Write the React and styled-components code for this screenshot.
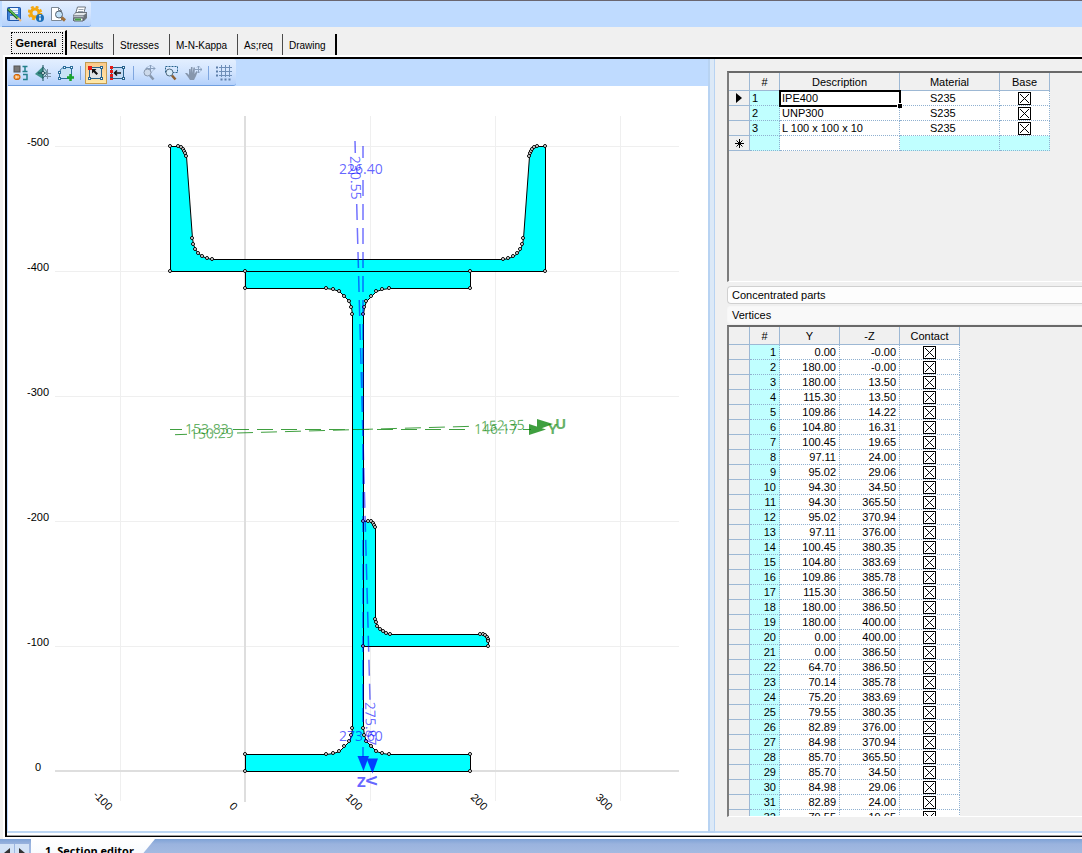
import React from "react";
import styled, { createGlobalStyle } from "styled-components";

const GlobalStyle = createGlobalStyle`
  * {
    box-sizing: border-box;
  }

  body {
    margin: 0;
    background: #f0f0f0;
    font-family: "Liberation Sans", Arial, sans-serif;
    font-size: 11px;
    color: #000;
    overflow: hidden;
  }
`;

const Window = styled.div`
  display: flex;
  flex-direction: column;
  height: 100vh;
`;

const TopBar = styled.header`
  display: flex;
  flex: none;
  height: 27px;
  padding-left: 2px;
  border-top: 1px solid #6a6670;
  background: #bfdbff;
`;

const ToolStrip = styled.div`
  display: flex;
  align-items: center;
  padding: ${({ $padding }) => $padding};
  border-bottom: 1px solid #6f9fe0;
  border-radius: 0 3px 3px 0;
  background: linear-gradient(#e3efff, #d2e4fe 50%, #b4d1fb);
`;

const ToolButton = styled.button`
  display: flex;
  align-items: center;
  justify-content: center;
  width: 22px;
  height: 22px;
  padding: 0;
  border: 1px solid ${({ $active }) => ($active ? "#c29b52" : "transparent")};
  background: ${({ $active }) =>
    $active ? "linear-gradient(#fbc98a, #ffd99c 50%, #ffe9a8)" : "none"};
`;

const Separator = styled.span`
  width: 1px;
  height: 14px;
  margin: 0 4px;
  background: #7fa6df;
`;

const Tabs = styled.nav`
  display: flex;
  align-items: flex-end;
  flex: none;
  height: 28px;
  padding-left: 10px;
`;

const Tab = styled.button`
  width: ${({ $width }) => $width};
  height: 21px;
  padding: 2px 0 0 3px;
  border: 0;
  border-right: 1px solid #4a4a4a;
  background: #f0f0f0;
  font: 10px "Liberation Sans", sans-serif;
  text-align: left;
  white-space: nowrap;

  &:not(:nth-child(2)) {
    padding-left: 6px;
  }

  &:last-child {
    border-right: 2px solid #000;
  }
`;

const ActiveTab = styled.button`
  width: 57px;
  height: 25px;
  padding: 1px 2px 2px 1px;
  border: 0;
  border-top: 1px solid #fff;
  border-right: 2px solid #000;
  background: #f0f0f0;
  font: bold 11px "Liberation Sans", sans-serif;

  span {
    display: block;
    line-height: 20px;
    padding-right: 2px;
    border: 1px dotted #000;
  }
`;

const Frame = styled.main`
  display: flex;
  flex: 1;
  flex-direction: column;
  min-height: 0;
  margin-left: 3px;
  border: solid #fff;
  border-width: 2px 0 2px 2px;
`;

const FrameInner = styled.div`
  display: grid;
  flex: 1;
  min-height: 0;
  grid-template-columns: minmax(0, 1fr) 7px 367px;
  border: solid #000;
  border-width: 2px 0 1px 2px;
`;

const Pane = styled.section`
  display: flex;
  flex-direction: column;
  min-width: 0;
  min-height: 0;
  padding: ${({ $padding }) => $padding || "0"};
  background: ${({ $background }) => $background};
  border-bottom: 2px solid #bcd6f3;
  border-left: ${({ $edge }) => ($edge ? "1px solid #bfdbff" : "0")};
  box-shadow: 0 2px 0 #fff, 0 3px 0 #a0a0a0;
  margin-bottom: 3px;
`;

const Splitter = styled.div`
  margin-bottom: 3px;
  border: solid #b8d3f2;
  border-width: 0 1px 2px 2px;
  background: #dce9f7;
  box-shadow: 0 2px 0 #fff, 0 3px 0 #a0a0a0;
`;

const CanvasBar = styled.div`
  display: flex;
  flex: none;
  height: 27px;
  background: #bfdbff;
`;

const Drawing = styled.svg`
  display: block;
  flex: 1;
  width: 100%;
  min-height: 0;
`;

const GridBox = styled.div`
  flex: ${({ $fill }) => ($fill ? "1" : "none")};
  height: ${({ $fill }) => ($fill ? "auto" : "211px")};
  min-height: 0;
  margin-top: ${({ $fill }) => ($fill ? "1px" : "0")};
  overflow: hidden;
  border: solid #696969;
  border-width: 2px 0 1px 2px;
  border-left-color: #7c7c7c;
  border-bottom-color: #fff;
`;

const Table = styled.table`
  table-layout: fixed;
  border-collapse: separate;
  border-spacing: 0;
  width: ${({ $width }) => $width};
`;

const HeadCell = styled.th`
  width: ${({ $width }) => $width};
  height: 18px;
  padding: 1px 0 0;
  border: solid #9db8d4;
  border-width: 0 1px 1px 0;
  background: #f0f0f0;
  font-weight: normal;
  line-height: 16px;
`;

const RowHead = styled.td`
  height: 15px;
  padding: 0;
  border: solid #9db8d4;
  border-width: 0 1px 1px 0;
  background: #f0f0f0;
  line-height: 14px;

  svg {
    display: block;
    margin: 0 auto;
  }
`;

const Cell = styled.td`
  position: relative;
  height: 15px;
  padding: ${({ $padding }) => $padding || "0 3px 0 2px"};
  border: dotted #8fb0d0;
  border-width: 0 1px 1px 0;
  background: ${({ $tint }) => ($tint ? "#c0ffff" : "#fff")};
  line-height: 14px;
  text-align: ${({ $align }) => $align || "left"};
`;

const SelectedCell = styled(Cell)`
  z-index: 1;
  outline: 2px solid #000;
  outline-offset: -1px;

  &::after {
    content: "";
    position: absolute;
    right: -3px;
    bottom: -3px;
    width: 4px;
    height: 4px;
    border: solid #fff;
    border-width: 1px 0 0 1px;
    background: #000;
  }
`;

const Check = styled.input`
  display: block;
  width: 13px;
  height: 13px;
  margin: 0 auto;
  appearance: none;
  border: 1px solid #000;
  background: linear-gradient(
        45deg,
        transparent 46%,
        #000 46%,
        #000 54%,
        transparent 54%
      )
      center / 9px 9px no-repeat,
    linear-gradient(
        -45deg,
        transparent 46%,
        #000 46%,
        #000 54%,
        transparent 54%
      )
      center / 9px 9px no-repeat,
    #fff;
`;

const Accordion = styled.button`
  flex: none;
  height: 18px;
  margin-top: ${({ $gap }) => $gap};
  padding: 0 4px;
  border: 1px solid ${({ $closed }) => ($closed ? "#d0d0d0" : "#f7f7f7")};
  border-right: 0;
  border-radius: 4px 0 0 4px;
  background: ${({ $closed }) => ($closed ? "#fdfdfd" : "#f9f9f9")};
  font: 11px "Liberation Sans", sans-serif;
  text-align: left;
`;

const Sheets = styled.footer`
  display: flex;
  flex: none;
  height: 14px;
  overflow: hidden;
  background: linear-gradient(#7ea2d6, #9ab3de 5px, #a3bae1);
`;

const SheetArrow = styled.button`
  width: 14px;
  height: 18px;
  margin: 5px 1px 0 0;
  padding: 0;
  border: 0;
  background: #d3e2f6;

  svg {
    display: block;
    margin: 2px auto;
  }
`;

const SheetTab = styled.button`
  width: 124px;
  height: 24px;
  margin-left: 1px;
  padding: 0 0 0 14px;
  border: 0;
  background: linear-gradient(#fff, #f4f8fe);
  clip-path: polygon(0 0, 100% 0, 84% 100%, 0 100%);
  font: bold 11px "Open Sans", sans-serif;
  line-height: 24px;
  text-align: left;
  white-space: nowrap;
`;

const SaveIcon = () => (
  <svg width="16" height="16" viewBox="0 0 16 16">
    <rect x="1.5" y="1.5" width="13" height="13" rx="1" fill="#3f82d8" stroke="#1f57ab" />
    <rect x="4" y="2" width="8" height="6" fill="#eef5fc" />
    <path d="M4 4.5h8M4 6.5h8" stroke="#a9c5e6" />
    <rect x="4" y="10" width="8" height="4" fill="#cddcf0" />
    <path d="M2 3l10 9.500" stroke="#24502a" strokeWidth="3" />
    <path d="M2.500 3l10 9.500" stroke="#5fcb50" strokeWidth="1.5" />
    <path d="M12 12l3 3" stroke="#efb97a" strokeWidth="2" />
  </svg>
);

const SettingsIcon = () => (
  <svg width="16" height="16" viewBox="0 0 16 16">
    <circle cx="7" cy="7" r="4" fill="none" stroke="#f5a80f" strokeWidth="3" />
    <circle cx="7" cy="7" r="6" fill="none" stroke="#f5a80f" strokeWidth="2.5" strokeDasharray="2.7 2.01" />
    <circle cx="12" cy="12" r="4" fill="#1c6fb8" />
    <path d="M12 11.5v3M12 9v1.5" stroke="#fff" strokeWidth="1.5" />
  </svg>
);

const PreviewIcon = () => (
  <svg width="16" height="16" viewBox="0 0 16 16">
    <path d="M1.500 1.500h7l3 3v10h-10z" fill="#fff" stroke="#7b8794" />
    <path d="M8.500 1.500v3h3" fill="none" stroke="#7b8794" />
    <circle cx="9" cy="8.500" r="3.500" fill="#c4e2f8" stroke="#55616f" />
    <path d="M11.500 11.500l3.500 3" stroke="#a0703c" strokeWidth="3" />
  </svg>
);

const PrintIcon = () => (
  <svg width="16" height="16" viewBox="0 0 16 16">
    <path d="M5.500 1h8l-2 7H3.500z" fill="#fff" stroke="#6f7780" />
    <path d="M6.500 3.500h5M6 5.500h5" stroke="#9aa4af" />
    <path d="M1 9l3-3h11v6l-3 3H1z" fill="#6c747c" />
    <path d="M1.500 9l2.500-2h10.500l-2.500 2z" fill="#e3e7ea" />
    <path d="M1.500 9.500h10v2h-10z" fill="#b6bdc4" />
    <path d="M2 12h9v3H2z" fill="#fff" stroke="#59616a" />
    <path d="M3 13.500h6" stroke="#43a047" strokeWidth="2" />
  </svg>
);

const ShapesIcon = () => (
  <svg width="16" height="16" viewBox="0 0 16 16">
    <rect x="1" y="1" width="6" height="6" fill="#777" stroke="#555" />
    <rect x="1" y="9.500" width="6" height="5" rx="2" fill="#f08a24" stroke="#c9630c" />
    <path d="M3 10.500v3M3 12h3" stroke="#fff3e0" />
    <path d="M9.500 1.500h5M9.500 6.500h5M12 1.500v5M10 9.500h4v5h-4" fill="none" stroke="#23808c" strokeWidth="1.500" />
  </svg>
);

const MirrorIcon = () => (
  <svg width="16" height="16" viewBox="0 0 16 16">
    <path d="M0 9l8-7.500V14z" fill="#3c8f86" />
    <path d="M8 2l5 6-5 5" fill="#bcd9e2" stroke="#4b7c8c" />
    <path d="M3 8h9M8 0v16" stroke="#174d56" />
    <circle cx="8" cy="8" r="1.500" fill="#fff" stroke="#174d56" />
    <path d="M12.500 4v10M10 8.500h6M10 11.500h6" stroke="#7b90a3" />
  </svg>
);

const AddPolygonIcon = () => (
  <svg width="17" height="16" viewBox="0 0 17 16">
    <path d="M2.500 13.500v-6c1-4 3-5 5-5h7v11z" fill="#c7e2f5" stroke="#2d6f9b" />
    <g fill="#fff" stroke="#2d6f9b">
      <rect x="1.500" y="12.500" width="2" height="2" />
      <rect x="1.500" y="6.500" width="2" height="2" />
      <rect x="6.500" y="1.500" width="2" height="2" />
      <rect x="13.500" y="1.500" width="2" height="2" />
    </g>
    <path d="M13.500 9v7M10 12.500h7" stroke="#19a52c" strokeWidth="2.500" />
  </svg>
);

const PickIcon = ({ move }) => (
  <svg width="18" height="16" viewBox="0 0 18 16">
    <rect x="2.500" y="2.500" width="12" height="11" fill={move ? "#c3dbf5" : "#dfe3e4"} stroke="#27628c" />
    <g fill="#fff" stroke="#27628c">
      <rect x="13.500" y="1.500" width="2" height="2" />
      <rect x="13.500" y="12.500" width="2" height="2" />
      <rect x="1.500" y="12.500" width="2" height="2" />
    </g>
    {move ? (
      <>
        <path d="M2.500 1v14" stroke="#e41b17" strokeWidth="3" strokeDasharray="3 1" />
        <path d="M5 8h7M8 5.500L5.500 8 8 10.500" fill="none" stroke="#111" strokeWidth="1.500" />
      </>
    ) : (
      <>
        <rect x="1" y="1" width="4" height="4" fill="#e41b17" />
        <path d="M5 4h4.500L8 5.500l3 3L9.500 10l-3-3L5 8.500z" fill="#111" />
      </>
    )}
  </svg>
);

const ZoomIcon = ({ pan }) => (
  <svg width="16" height="16" viewBox="0 0 16 16">
    {pan ? (
      <path d="M5 3.500h9M9.500 0v8M5 3.500l2-2M5 3.500l2 2M14 3.500l-2-2M14 3.500l-2 2M8 1.500l1.500-1.500 1.500 1.500M8 6.500L9.500 8 11 6.500" fill="none" stroke="#8aa0bd" />
    ) : (
      <rect x="2.500" y="1.500" width="12" height="6" fill="none" stroke="#27628c" strokeDasharray="2 1" />
    )}
    <circle cx="6.500" cy="7.500" r="3.500" fill={pan ? "#ccd9ea" : "#d7ebfa"} stroke={pan ? "#8797ad" : "#526c82"} />
    <path d="M9 10.500l3.500 4" stroke={pan ? "#8797ad" : "#8c6034"} strokeWidth="2.500" />
  </svg>
);

const HandIcon = () => (
  <svg width="17" height="16" viewBox="0 0 17 16">
    <path d="M0 8h2l2 2V4h1.500v4l.5-6h1.500v6l1-5.500h1.500L9.500 9l2-3 1 1L11 11l-2 4H5l-2-3z" fill="#8797ad" />
    <path d="M10 4.500h7M13.500 1v7M15.500 3l1.500 1.500L15.500 6M12 2.500L13.500 1 15 2.500M12 6.500L13.500 8 15 6.500" fill="none" stroke="#8aa0bd" />
  </svg>
);

const RasterIcon = () => (
  <svg width="18" height="16" viewBox="0 0 18 16">
    <path d="M6.500 0v12M10.500 0v12M14.500 0v12M4 2.500h13M4 6.500h13M4 10.500h13" stroke="#6f8fb8" />
    <path d="M1 2.500h2M1 6.500h2M1 10.500h2M5.500 14.500h2M9.500 14.500h2M13.500 14.500h2" stroke="#5e7fa9" strokeWidth="2" />
  </svg>
);

const vertices = [
  [0, 0], [180, 0], [180, 13.5], [115.3, 13.5], [109.86, 14.22],
  [104.8, 16.31], [100.45, 19.65], [97.11, 24], [95.02, 29.06],
  [94.3, 34.5], [94.3, 365.5], [95.02, 370.94], [97.11, 376],
  [100.45, 380.35], [104.8, 383.69], [109.86, 385.78], [115.3, 386.5],
  [180, 386.5], [180, 400], [0, 400], [0, 386.5], [64.7, 386.5],
  [70.14, 385.78], [75.2, 383.69], [79.55, 380.35], [82.89, 376],
  [84.98, 370.94], [85.7, 365.5], [85.7, 34.5], [84.98, 29.06],
  [82.89, 24], [79.55, 19.65], [75.2, 16.31], [70.14, 14.22],
  [64.7, 13.5], [0, 13.5]
];

const sections = [
  { name: "IPE400", material: "S235" },
  { name: "UNP300", material: "S235" },
  { name: "L 100 x 100 x 10", material: "S235" }
];

const beam = vertices.map(([y, z]) => [
  Math.round(245 + y * 1.25),
  Math.round(271 + z * 1.25)
]);

const channelHalf = [
  [170, 271], [170, 146], [178, 146], [181, 147], [183, 149], [184, 151],
  [185, 153], [186, 156], [192, 238], [193, 244], [195, 249], [198, 253],
  [202, 256], [207, 258], [212, 259]
];
const channel = [
  ...channelHalf,
  ...channelHalf.map(([x, y]) => [715 - x, y]).reverse()
];

const angle = [
  [363, 646], [363, 521], [368, 521], [371, 521], [373, 523], [374, 525],
  [375, 527], [375, 619], [376, 622], [377, 626], [380, 629], [383, 631],
  [386, 633], [390, 634], [480, 634], [483, 634], [485, 635], [487, 637],
  [488, 639], [488, 641], [488, 646]
];

const Shape = ({ points }) => (
  <g transform="translate(.5 .5)" stroke="#000">
    <polygon points={points.map(p => p.join(",")).join(" ")} fill="#0ff" />
  </g>
);

const Nodes = ({ points }) => (
  <g fill="#fff" stroke="#000">
    {points.map(([x, y]) => (
      <circle key={`${x}-${y}`} cx={x} cy={y} r="1.500" />
    ))}
  </g>
);

const SectionDrawing = () => (
  <Drawing viewBox="8 86 700 745" preserveAspectRatio="xMinYMin meet">
    <g stroke="#efefef">
      {[120.5, 370.5, 495.5, 620.5].map(x => (
        <line key={x} x1={x} x2={x} y1="116" y2="801" />
      ))}
      {[146.5, 271.5, 396.5, 521.5, 646.5].map(y => (
        <line key={y} x1="55" x2="679" y1={y} y2={y} />
      ))}
    </g>
    <path d="M245 116V802M55 771H679" stroke="#dedede" strokeWidth="2" />

    <g fontSize="11" textAnchor="middle">
      {[500, 400, 300, 200, 100, 0].map(z => (
        <text key={z} x="38" y={771 - z * 1.25}>
          {z ? -z : 0}
        </text>
      ))}
    </g>
    <g fontSize="11" textAnchor="end">
      {[-100, 0, 100, 200, 300].map(y => (
        <text key={y} transform={`translate(${233 + y * 1.25} 811) rotate(45)`}>
          {y}
        </text>
      ))}
    </g>

    <Shape points={channel} />
    <Shape points={beam} />
    <Shape points={angle} />
    <Nodes points={channel} />
    <Nodes points={beam} />
    <Nodes points={angle} />

    <g stroke="#00f" strokeWidth="1.500" opacity=".55">
      <path d="M363 146v12M363 747v10" />
      <path d="M363 180V722" strokeDasharray="16 8" />
      <path d="M355 141l.3 12" />
      <path d="M356.700 204L370 700" strokeDasharray="16 8" />
    </g>
    <g fill="#00f" opacity=".75">
      <path d="M357.500 756h11.500l-5.500 15z" />
      <path d="M366.500 758.500h11.500l-5.500 15z" />
    </g>
    <g stroke="#008000" opacity=".75">
      <path d="M170 429.500h12M523 429.500h8M175 434.700l12-.4" />
      <path d="M233 429.500H470" strokeDasharray="16 8" />
      <path d="M237 433L472 426.300" strokeDasharray="16 8" />
    </g>
    <g fill="#008000" opacity=".75">
      <path d="M529 424v11l17-5.500z" />
      <path d="M537 419v11l16-6z" />
    </g>

    <g fontFamily="Open Sans, sans-serif" fontSize="14" fill="#00f" fillOpacity=".62">
      <text x="339" y="174">226.40</text>
      <text transform="translate(350 156) rotate(88.500)">230.55</text>
      <text x="339" y="741">273.60</text>
      <text transform="translate(365 702) rotate(88.500)">275.87</text>
      <text x="357" y="787" fontSize="15" fontWeight="bold">Z</text>
      <text transform="translate(366 776) rotate(88.500)" fontSize="15" fontWeight="bold">V</text>
    </g>
    <g fontFamily="Open Sans, sans-serif" fontSize="14" fill="#008000" fillOpacity=".62">
      <text x="185" y="434">153.83</text>
      <text transform="translate(190 439) rotate(-1.500)">150.29</text>
      <text x="474" y="434">146.17</text>
      <text transform="translate(481 431) rotate(-1.500)">152.35</text>
      <text x="548" y="434" fontSize="15" fontWeight="bold">Y</text>
      <text x="555" y="429" fontSize="15" fontWeight="bold">U</text>
    </g>
  </Drawing>
);

const App = () => (
  <>
    <GlobalStyle />
    <Window>
      <TopBar>
        <ToolStrip $padding="0 0 0 1px">
          <ToolButton aria-label="Save"><SaveIcon /></ToolButton>
          <ToolButton aria-label="Settings"><SettingsIcon /></ToolButton>
          <ToolButton aria-label="Preview"><PreviewIcon /></ToolButton>
          <ToolButton aria-label="Print"><PrintIcon /></ToolButton>
        </ToolStrip>
      </TopBar>

      <Tabs>
        <ActiveTab><span>General</span></ActiveTab>
        <Tab $width="47px">Results</Tab>
        <Tab $width="56px">Stresses</Tab>
        <Tab $width="68px">M-N-Kappa</Tab>
        <Tab $width="45px">As;req</Tab>
        <Tab $width="54px">Drawing</Tab>
      </Tabs>

      <Frame>
        <FrameInner>
          <Pane $background="#fff" $edge>
            <CanvasBar>
              <ToolStrip $padding="1px 1px 0 2px">
                <ToolButton aria-label="Shapes"><ShapesIcon /></ToolButton>
                <ToolButton aria-label="Mirror"><MirrorIcon /></ToolButton>
                <ToolButton aria-label="Add polygon"><AddPolygonIcon /></ToolButton>
                <Separator />
                <ToolButton $active aria-label="Select"><PickIcon /></ToolButton>
                <ToolButton aria-label="Move edge"><PickIcon move /></ToolButton>
                <Separator />
                <ToolButton aria-label="Zoom extents"><ZoomIcon pan /></ToolButton>
                <ToolButton aria-label="Zoom window"><ZoomIcon /></ToolButton>
                <ToolButton aria-label="Pan"><HandIcon /></ToolButton>
                <Separator />
                <ToolButton aria-label="Grid"><RasterIcon /></ToolButton>
              </ToolStrip>
            </CanvasBar>
            <SectionDrawing />
          </Pane>
          <Splitter />
          <Pane $background="#f0f0f0" $padding="12px 0 14px 12px">
            <GridBox>
              <Table $width="321px">
                <thead>
                  <tr>
                    <HeadCell $width="21px" />
                    <HeadCell $width="30px">#</HeadCell>
                    <HeadCell $width="120px">Description</HeadCell>
                    <HeadCell $width="100px">Material</HeadCell>
                    <HeadCell $width="50px">Base</HeadCell>
                  </tr>
                </thead>
                <tbody>
                  {sections.map(({ name, material }, i) => {
                    const NameCell = i === 0 ? SelectedCell : Cell;
                    return (
                      <tr key={name}>
                        <RowHead>
                          {i === 0 && (
                            <svg width="6" height="10" viewBox="0 0 6 10">
                              <path d="M0 0l6 5-6 5z" />
                            </svg>
                          )}
                        </RowHead>
                        <Cell $tint>{i + 1}</Cell>
                        <NameCell>{name}</NameCell>
                        <Cell $padding="0 0 0 30px">{material}</Cell>
                        <Cell $padding="0">
                          <Check type="checkbox" defaultChecked aria-label={`Base ${name}`} />
                        </Cell>
                      </tr>
                    );
                  })}
                  <tr>
                    <RowHead>
                      <svg width="9" height="9" viewBox="0 0 9 9">
                        <path d="M0 4.500h9M4.500 0v9M1.500 1.500l6 6M7.500 1.500l-6 6" stroke="#000" />
                      </svg>
                    </RowHead>
                    <Cell $tint />
                    <Cell />
                    <Cell $tint />
                    <Cell $tint />
                  </tr>
                </tbody>
              </Table>
            </GridBox>
            <Accordion $gap="4px" $closed>Concentrated parts</Accordion>
            <Accordion $gap="2px">Vertices</Accordion>
            <GridBox $fill>
              <Table $width="231px">
                <thead>
                  <tr>
                    <HeadCell $width="21px" />
                    <HeadCell $width="30px">#</HeadCell>
                    <HeadCell $width="60px">Y</HeadCell>
                    <HeadCell $width="60px">-Z</HeadCell>
                    <HeadCell $width="60px">Contact</HeadCell>
                  </tr>
                </thead>
                <tbody>
                  {vertices.map(([y, z], i) => (
                    <tr key={i}>
                      <RowHead />
                      <Cell $tint $align="right">{i + 1}</Cell>
                      <Cell $align="right">{y.toFixed(2)}</Cell>
                      <Cell $align="right">{z === 0 ? "-0.00" : z.toFixed(2)}</Cell>
                      <Cell $padding="0">
                        <Check type="checkbox" defaultChecked aria-label={`Contact ${i + 1}`} />
                      </Cell>
                    </tr>
                  ))}
                </tbody>
              </Table>
            </GridBox>
          </Pane>
        </FrameInner>
      </Frame>

      <Sheets>
        <SheetArrow aria-label="Previous sheet">
          <svg width="6" height="10" viewBox="0 0 6 10"><path d="M6 0L0 5l6 5z" fill="#333" /></svg>
        </SheetArrow>
        <SheetArrow aria-label="Next sheet">
          <svg width="6" height="10" viewBox="0 0 6 10"><path d="M0 0l6 5-6 5z" fill="#333" /></svg>
        </SheetArrow>
        <SheetTab>1. Section editor</SheetTab>
      </Sheets>
    </Window>
  </>
);

export default App;
